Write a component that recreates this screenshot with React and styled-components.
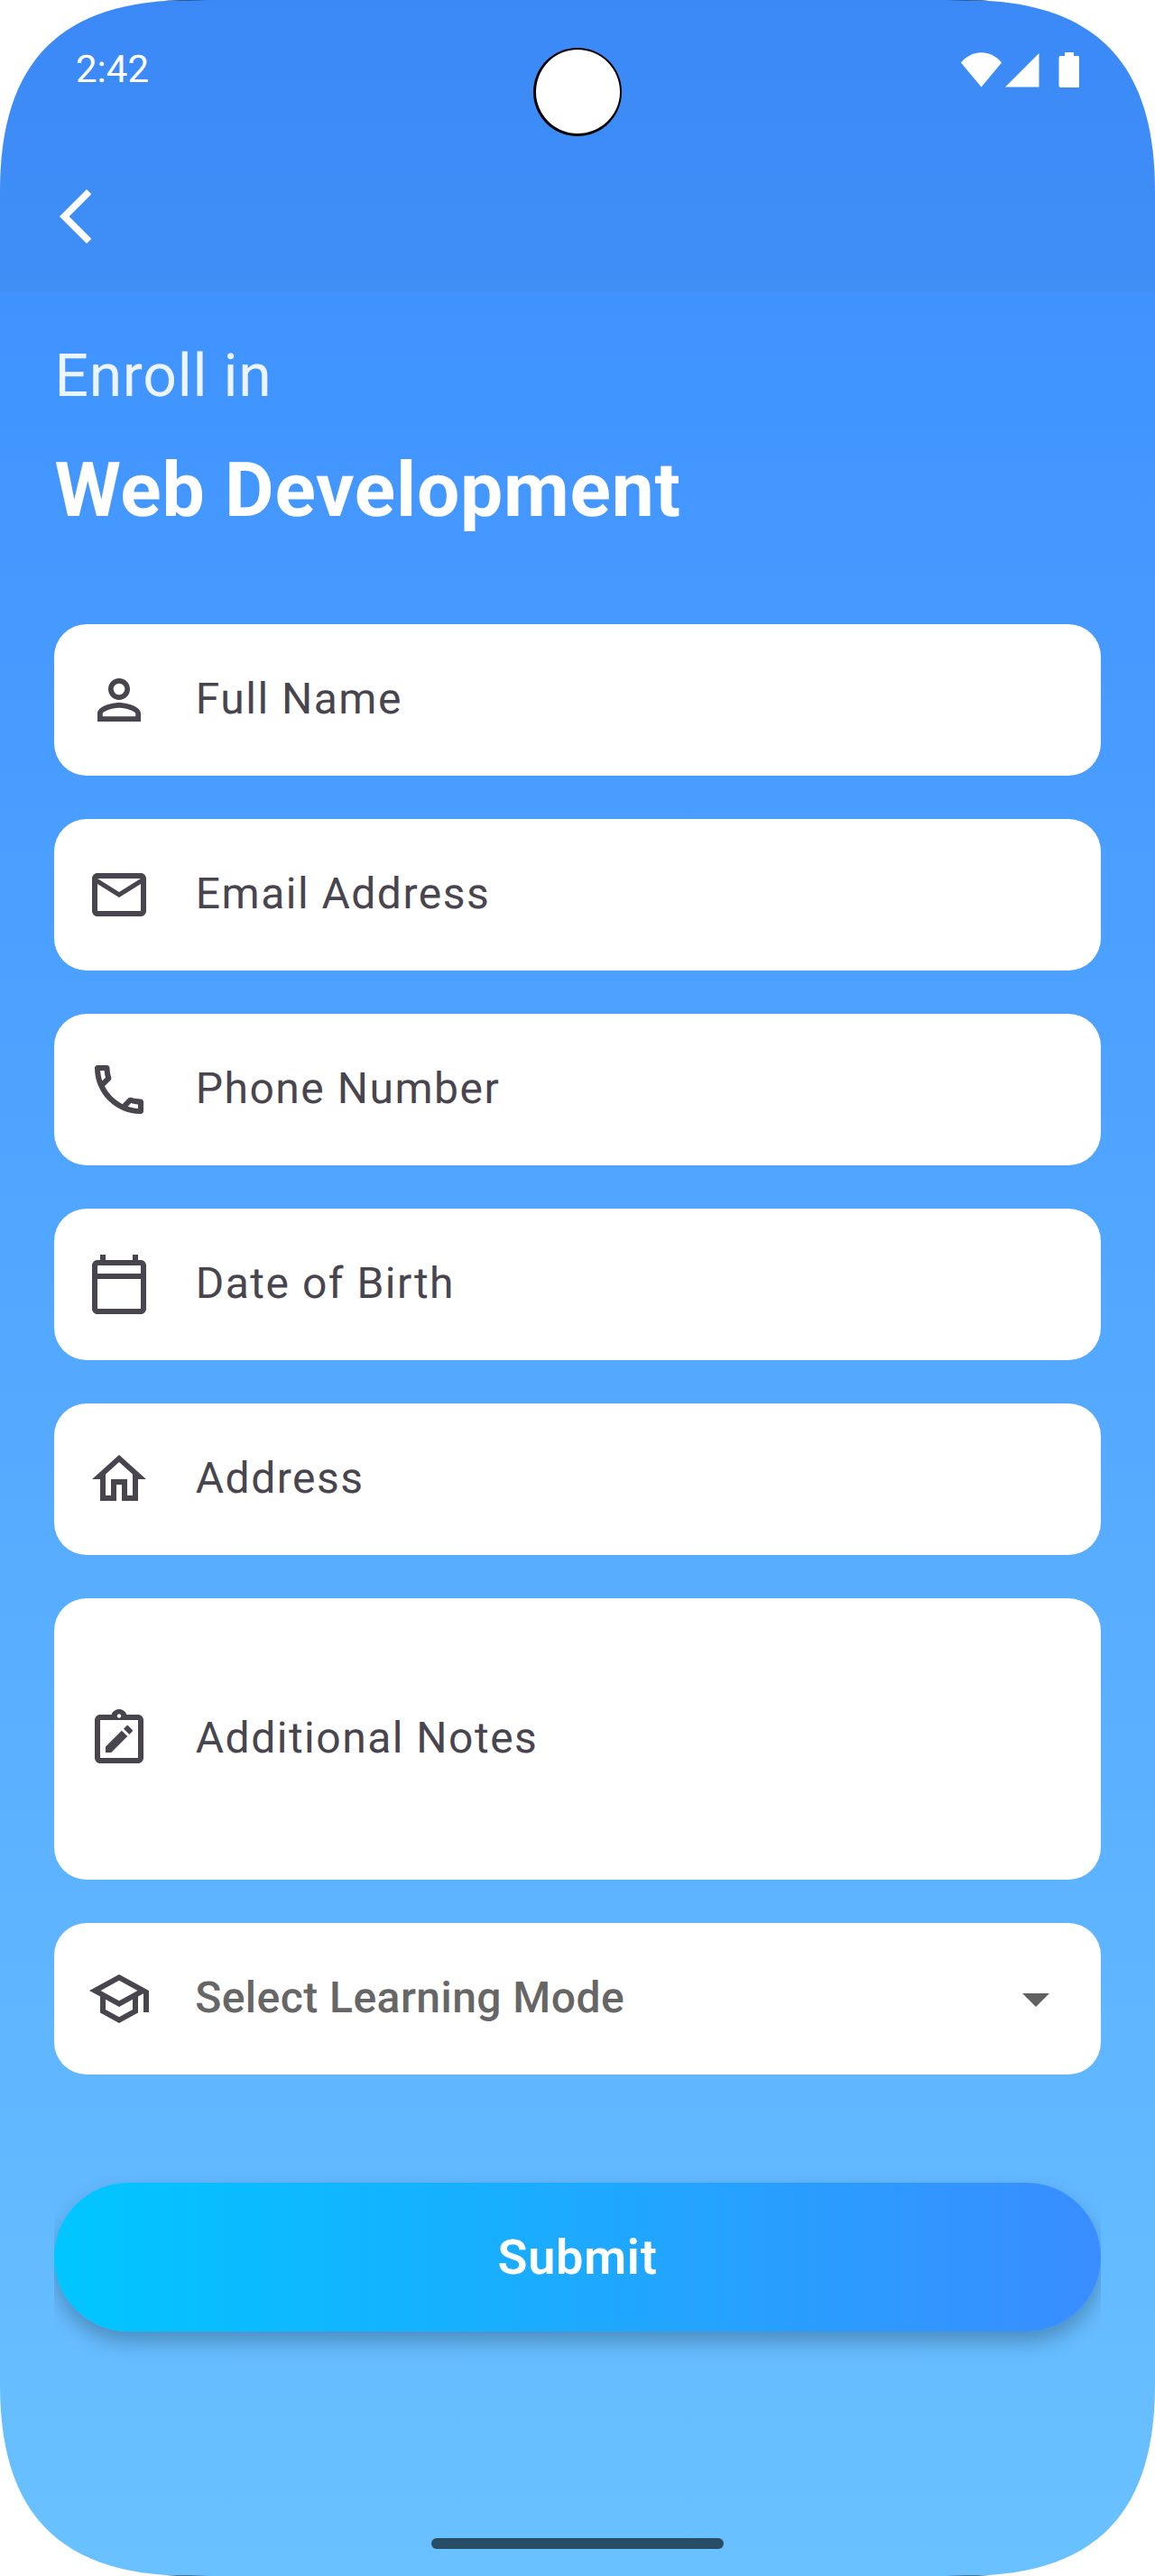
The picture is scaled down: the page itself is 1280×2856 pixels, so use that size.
import React from "react";
import styled, { createGlobalStyle } from "styled-components";
import {
  MdPersonOutline,
  MdOutlineMail,
  MdOutlinePhone,
  MdOutlineCalendarToday,
  MdOutlineHome,
  MdOutlineNoteAlt,
  MdOutlineSchool,
  MdArrowDropDown,
  MdArrowBackIosNew,
} from "react-icons/md";

const GlobalStyle = createGlobalStyle`
  * { box-sizing: border-box; }
  body {
    margin: 0;
    background: #ffffff;
    font-family: Roboto, "Liberation Sans", sans-serif;
    text-rendering: geometricPrecision;
    -webkit-font-smoothing: antialiased;
  }
`;

const SCREEN_SHAPE =
  "M0 212C0 67.5 67.5 0 212 0H1068C1212.5 0 1280 67.5 1280 212V2644C1280 2788.5 1212.5 2856 1068 2856H212C67.5 2856 0 2788.5 0 2644Z";

const EDGE =
  "linear-gradient(90deg, #000 176px, transparent 232px, transparent 1048px, #000 1104px)";

const Screen = styled.div`
  position: relative;
  display: flex;
  flex-direction: column;
  width: 1280px;
  height: 2856px;
  overflow: hidden;
  background:
    ${EDGE} top / 100% 1px no-repeat,
    ${EDGE} bottom / 100% 1px no-repeat,
    linear-gradient(180deg, #3a8dff 0%, #6ac1ff 100%);
  clip-path: path("${SCREEN_SHAPE}");
`;

const TopArea = styled.header`
  height: 324px;
  flex: none;
  background: rgba(72, 103, 178, 0.1);
`;

const StatusBar = styled.div`
  display: flex;
  align-items: center;
  justify-content: space-between;
  height: 156px;
  padding: 0 84px;
`;

const Clock = styled.time`
  font-size: 42px;
  line-height: 50px;
  color: #ffffff;
`;

const StatusIcons = styled.svg`
  display: block;
  width: 132px;
  height: 40px;
  fill: #ffffff;
`;

const CameraHole = styled.div`
  position: absolute;
  left: 591px;
  top: 53px;
  width: 98px;
  height: 98px;
  border-radius: 50%;
  background: #ffffff;
  border: solid #000000;
  border-width: 2px 2px 3px 3px;
`;

const AppBar = styled.div`
  display: flex;
  align-items: center;
  height: 168px;
  padding-left: 48px;
`;

const BackButton = styled.button`
  display: flex;
  padding: 0;
  border: 0;
  background: none;
  color: #ffffff;
  font-size: 72px;
`;

const Content = styled.main`
  display: flex;
  flex-direction: column;
  flex: 1;
  padding: 55px 60px 0;
`;

const Eyebrow = styled.p`
  margin: 0 0 38px;
  padding-left: 0.4px;
  font-size: 66px;
  line-height: 78px;
  letter-spacing: 0.75px;
  color: rgba(255, 255, 255, 0.9);
`;

const Title = styled.h1`
  margin: 0;
  padding-left: 0.4px;
  font-size: 84px;
  line-height: 98px;
  font-weight: 700;
  letter-spacing: 0.75px;
  color: #ffffff;
`;

const Form = styled.form`
  display: flex;
  flex-direction: column;
  gap: 48px;
  margin-top: 99px;
`;

const Field = styled.label`
  display: flex;
  align-items: center;
  gap: 48px;
  height: ${(p) => (p.$tall ? 312 : 168)}px;
  padding: 0 36px;
  border-radius: 36px;
  background: #ffffff;
  color: #49454f;
`;

const FieldIcon = styled.span`
  display: flex;
  font-size: 72px;
  color: ${(p) => p.$color || "#49454f"};
`;

const FieldText = styled.span`
  flex: 1;
  padding: 0 0 2px ${(p) => (p.$select ? 0.2 : 0.75)}px;
  font-size: 48px;
  line-height: 56px;
  font-weight: ${(p) => (p.$select ? 500 : 400)};
  letter-spacing: ${(p) => (p.$select ? 0.45 : 1.5)}px;
  color: ${(p) => (p.$select ? "#666666" : "#49454f")};
`;

const SubmitArea = styled.div`
  margin-top: 72px;
  overflow-x: clip;
  overflow-y: visible;
`;

const SubmitButton = styled.button`
  display: flex;
  align-items: center;
  justify-content: center;
  width: 100%;
  height: 165px;
  padding: 0;
  border: 0;
  border-radius: 90px;
  background: linear-gradient(90deg, #00c6ff, #3a8dff);
  box-shadow: 0 11px 22px rgba(0, 0, 0, 0.25);
  font-family: inherit;
  font-size: 54px;
  line-height: 64px;
  font-weight: 600;
  letter-spacing: 0.75px;
  color: #ffffff;
`;

const NavBar = styled.footer`
  display: flex;
  justify-content: center;
  height: 42px;
`;

const NavHandle = styled.div`
  width: 324px;
  height: 12px;
  border-radius: 6px;
  background: #284d66;
`;

const fields = [
  { label: "Full Name", Icon: MdPersonOutline },
  { label: "Email Address", Icon: MdOutlineMail },
  { label: "Phone Number", Icon: MdOutlinePhone },
  { label: "Date of Birth", Icon: MdOutlineCalendarToday },
  { label: "Address", Icon: MdOutlineHome },
  { label: "Additional Notes", Icon: MdOutlineNoteAlt, tall: true },
];

export default function App() {
  return (
    <>
      <GlobalStyle />
      <Screen>
        <TopArea>
          <StatusBar>
            <Clock>2:42</Clock>
            <StatusIcons viewBox="0 1 132 40">
              <path d="M1 12.5C13-2.5 34-2.5 46 12.5L23.5 39.5Z" />
              <path d="M87.500 2V39.500H50Z" />
              <path d="M116 1h10v4h4.500q2 0 2 2v31q0 2-2 2h-19q-2 0-2-2V7q0-2 2-2H116Z" />
            </StatusIcons>
          </StatusBar>
          <AppBar>
            <BackButton type="button" aria-label="Back">
              <MdArrowBackIosNew />
            </BackButton>
          </AppBar>
        </TopArea>
        <CameraHole />
        <Content>
          <Eyebrow>Enroll in</Eyebrow>
          <Title>Web Development</Title>
          <Form>
            {fields.map(({ label, Icon, tall }) => (
              <Field key={label} $tall={tall}>
                <FieldIcon>
                  <Icon />
                </FieldIcon>
                <FieldText>{label}</FieldText>
              </Field>
            ))}
            <Field>
              <FieldIcon>
                <MdOutlineSchool />
              </FieldIcon>
              <FieldText $select>Select Learning Mode</FieldText>
              <FieldIcon $color="#616161">
                <MdArrowDropDown />
              </FieldIcon>
            </Field>
            <SubmitArea>
              <SubmitButton type="button">Submit</SubmitButton>
            </SubmitArea>
          </Form>
        </Content>
        <NavBar>
          <NavHandle />
        </NavBar>
      </Screen>
    </>
  );
}
